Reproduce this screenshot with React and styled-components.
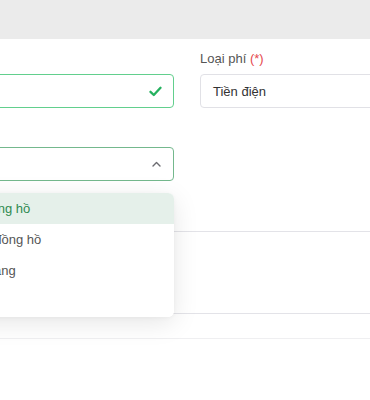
import React from 'react';
import styled, { createGlobalStyle } from 'styled-components';

const GlobalStyle = createGlobalStyle`
  body {
    margin: 0;
    background: #ffffff;
    font-family: "Liberation Sans", Arial, sans-serif;
    overflow: hidden;
  }
`

//Styled components
const Page = styled.div`
  width: 370px;
  height: 400px;
  overflow: hidden;
`
const TopBar = styled.div`
  height: 39px;
  background: #ebebeb;
`
const Form = styled.div`
  display: grid;
  grid-template-columns: 236px 236px;
  column-gap: 26px;
  row-gap: 16px;
  padding-top: 12px;
  margin-left: -62px;
`
const Field = styled.div`
  display: flex;
  flex-direction: column;
  position: relative;
`
const Label = styled.div`
  font-size: 13px;
  line-height: 16px;
  color: #555;
  margin-bottom: 7px;
  white-space: nowrap;
`
const Req = styled.span`
  color: #e5484d;
`
const Box = styled.div`
  box-sizing: border-box;
  height: 34px;
  display: flex;
  align-items: center;
  justify-content: space-between;
  padding: 0 ${p => (p.$valid ? '11px' : '12px')} 0 12px;
  border: 1px solid ${p => p.$border || '#e1e1e6'};
  border-radius: 4px;
  background: #fff;
  font-size: 13px;
  color: #333;
  white-space: nowrap;
`
const Menu = styled.ul`
  position: absolute;
  top: calc(100% + 12px);
  left: 0;
  right: 0;
  margin: 0;
  padding: 0;
  list-style: none;
  background: #fff;
  border-radius: 6px;
  overflow: hidden;
  box-shadow: 0 6px 26px rgba(0, 0, 0, 0.1), 0 1px 4px rgba(0, 0, 0, 0.04);
  z-index: 2;
`
const Item = styled.li`
  height: 31px;
  display: flex;
  align-items: center;
  padding: 0 ${p => p.$pad || 12}px;
  font-size: 13px;
  white-space: nowrap;
  color: ${p => (p.$active ? '#2f8a50' : '#555')};
  background: ${p => (p.$active ? '#e5f0ea' : '#fff')};
`
const Section = styled.div`
  margin-top: 50px;
  height: 81px;
  border-top: 1px solid #e3e3e8;
  border-bottom: 1px solid #e3e3e8;
`
const Divider = styled.div`
  margin-top: 24px;
  border-top: 1px solid #efeff1;
`

const Check = () => (
  <svg width="13" height="11" viewBox="0 0 13 11">
    <polyline points="1.5,5.8 4.8,9 11.5,1.8" fill="none" stroke="#25b15f" strokeWidth="2.3" strokeLinecap="round" strokeLinejoin="round" />
  </svg>
)

const ChevronUp = () => (
  <svg width="9" height="6" viewBox="0 0 9 6">
    <polyline points="1,5 4.5,1.5 8,5" fill="none" stroke="#6b6b70" strokeWidth="1.4" strokeLinecap="round" strokeLinejoin="round" />
  </svg>
)

const options = [
  { text: 'Theo đồng hồ', pad: 12 },
  { text: 'Không đồng hồ', pad: 15 },
  { text: 'Theo tháng', pad: 12 },
  { text: 'Khác', pad: 12 },
];

const App = () => {
  return (
    <Page>
      <GlobalStyle />
      <TopBar />
      <Form>
        <Field>
          <Label>Căn hộ</Label>
          <Box $border="#62cf8d" $valid>
            <span />
            <Check />
          </Box>
        </Field>
        <Field>
          <Label>Loại phí <Req>(*)</Req></Label>
          <Box>Tiền điện</Box>
        </Field>
        <Field>
          <Label>Cách</Label>
          <Box $border="#74b88d">
            <span />
            <ChevronUp />
          </Box>
          <Menu>
            {options.map((o, i) => (
              <Item key={o.text} $pad={o.pad} $active={i === 0}>{o.text}</Item>
            ))}
          </Menu>
        </Field>
        <div />
      </Form>
      <Section />
      <Divider />
    </Page>
  );
};

export default App;
